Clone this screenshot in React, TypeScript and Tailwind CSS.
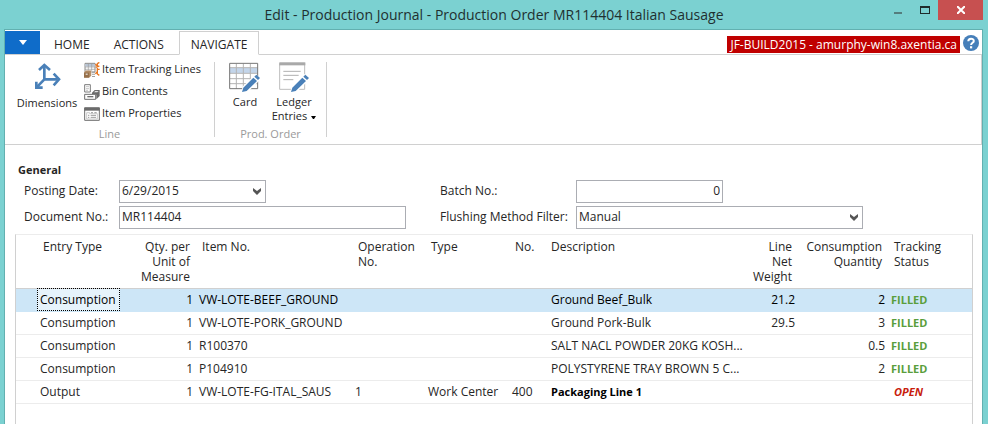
import React, { useState } from "react";

const columns = [
  { title: "", width: "w-[21px]", align: "text-left" },
  { title: "Entry Type", width: "w-[83px]", align: "text-left" },
  { title: "Qty. per\nUnit of\nMeasure", width: "w-[76px]", align: "text-right" },
  { title: "Item No.", width: "w-[156px]", align: "text-left" },
  { title: "Operation\nNo.", width: "w-[73px]", align: "text-left" },
  { title: "Type", width: "w-[84px]", align: "text-left" },
  { title: "No.", width: "w-[36px]", align: "text-left" },
  { title: "Description", width: "", align: "text-left" },
  { title: "Line\nNet\nWeight", width: "w-[56px]", align: "text-right" },
  { title: "Consumption\nQuantity", width: "w-[90px]", align: "text-right" },
  { title: "Tracking\nStatus", width: "w-[84px]", align: "text-left" },
];

const rows = [
  { entry: "Consumption", qty: "1", item: "VW-LOTE-BEEF_GROUND", op: "", type: "", no: "", desc: "Ground Beef_Bulk", weight: "21.2", consumed: "2", status: "FILLED" },
  { entry: "Consumption", qty: "1", item: "VW-LOTE-PORK_GROUND", op: "", type: "", no: "", desc: "Ground Pork-Bulk", weight: "29.5", consumed: "3", status: "FILLED" },
  { entry: "Consumption", qty: "1", item: "R100370", op: "", type: "", no: "", desc: "SALT NACL POWDER 20KG KOSH...", weight: "", consumed: "0.5", status: "FILLED" },
  { entry: "Consumption", qty: "1", item: "P104910", op: "", type: "", no: "", desc: "POLYSTYRENE TRAY BROWN 5 C...", weight: "", consumed: "2", status: "FILLED" },
  { entry: "Output", qty: "1", item: "VW-LOTE-FG-ITAL_SAUS", op: "1", type: "Work Center", no: "400", desc: "Packaging Line 1", weight: "", consumed: "", status: "OPEN" },
];

const DimensionsIcon = () => (
  <svg width="30" height="28" viewBox="-6 0 90 84" fill="none" stroke="#4a80b8" strokeWidth="8">
    <path d="M31 10V52H70M31 52L10 74" />
    <path d="M15 24L31 9L48 24" />
    <path d="M59 35L75 52L59 70" />
    <path d="M7 59V77H26" />
    <path d="M3 62V81H24Z" fill="#4a80b8" stroke="none" />
  </svg>
);

const Pencil = () => (
  <>
    <path d="M36 91L41 74L79 36L96 51L57 89Z" fill="#fff" />
    <path d="M39 90L43 77L73 47L84 57L53 87Z" fill="#4a80b8" />
    <path d="M76 44L82 38L93 48L87 54Z" fill="#4a80b8" />
  </>
);

const CardIcon = () => (
  <svg width="32" height="31" viewBox="0 0 96 93">
    <path d="M2 5H86V81H2Z" fill="#fff" />
    <path d="M3 18H86V33H3Z" fill="#c3d5ea" />
    <path d="M3 17H86M3 34H86M3 50H86M3 65H86M22 5V81M43 5V81M64 5V81" stroke="#b4b4b4" strokeWidth="3" />
    <path d="M2 4H86V80H2Z" fill="none" stroke="#757575" strokeWidth="3" />
    <Pencil />
  </svg>
);

const LedgerIcon = () => (
  <svg width="32" height="31" viewBox="0 0 96 93">
    <path d="M5 4H80V82H5Z" fill="#fff" stroke="#bdbdbd" strokeWidth="3" />
    <path d="M4 1H82V10H4Z" fill="#a9a9a9" />
    <path d="M16 28H68M16 40H62M16 53H46" stroke="#b0b0b0" strokeWidth="3" />
    <Pencil />
  </svg>
);

const TrackingIcon = () => (
  <svg width="16" height="16" viewBox="0 0 48 48">
    <path d="M3 4H33V30H3Z" fill="#fff" stroke="#8a8a8a" strokeWidth="3" />
    <path d="M4 6H32V14H4Z" fill="#b9c6d6" />
    <path d="M3 15H33M3 22H33M13 4V28M23 4V28" stroke="#9c9c9c" strokeWidth="2" />
    <path d="M0 31L6 25H22V41L16 47H0Z" fill="#b08a63" stroke="#fff" strokeWidth="1" />
    <path d="M0 32H15V47H0Z" fill="#96704a" />
    <path d="M5 35H11V38H5Z" fill="#fff" />
    <path d="M24 29H33V32H24ZM24 35H33V38H24ZM24 42H33V45H24Z" fill="#a0a0a0" />
    <path d="M46 1L40 5V36L46 40M40 12L34 7M40 22H47M40 29L34 35M35 16L46 12" fill="none" stroke="#e87722" strokeWidth="4" />
  </svg>
);

const BinIcon = () => (
  <svg width="16" height="16" viewBox="0 0 48 48">
    <path d="M2 2H19V24H2Z" fill="#fff" stroke="#7c7c7c" strokeWidth="3" />
    <path d="M6 8H15M6 14H15M6 19H12" stroke="#a8a8a8" strokeWidth="2" />
    <path d="M24 26L32 18H47V36L37 46V32H24Z" fill="#6b6b6b" />
    <path d="M30 25L34 21H44L40 25Z" fill="#e4e4e4" />
    <path d="M2 31H35V46H2Z" fill="#fff" stroke="#6f6f6f" strokeWidth="3" />
    <path d="M10 38H28" stroke="#6f6f6f" strokeWidth="4" />
  </svg>
);

const PropertiesIcon = () => (
  <svg width="16" height="16" viewBox="0 0 48 48">
    <path d="M2 6H46V43H2Z" fill="#fff" stroke="#6f6f6f" strokeWidth="3" />
    <path d="M1 4H47V14H1Z" fill="#6b6b6b" />
    <path d="M8 20H17V23H40V39H8Z" fill="#fff" stroke="#b0b0b0" strokeWidth="2" />
    <path d="M12 28H16M12 34H16M20 28H36M20 34H36M21 20H27M31 20H38" stroke="#9a9a9a" strokeWidth="3" />
  </svg>
);

const Chevron = () => (
  <svg className="pointer-events-none absolute right-[5px] top-[8px]" width="8" height="7" viewBox="0 0 8 7">
    <path d="M0 0L4 3L8 0V3L4 7L0 3Z" fill="#555" />
  </svg>
);

const smallActions = [
  { label: "Item Tracking Lines", Icon: TrackingIcon },
  { label: "Bin Contents", Icon: BinIcon },
  { label: "Item Properties", Icon: PropertiesIcon },
];

const TitleBar = () => (
  <div className="relative flex h-[29px] items-center justify-center">
    <h1 className="text-[14px] leading-[20px] text-[#1f3030]">
      Edit - Production Journal - Production Order MR114404 Italian Sausage
    </h1>
    <div className="absolute right-[5px] top-0 flex h-[20px]">
      <button aria-label="Minimize" className="flex w-[27px] items-center justify-center pt-[5px]">
        <span className="h-[2px] w-[8px] bg-[#547d7d]" />
      </button>
      <button aria-label="Maximize" className="flex w-[27px] items-center justify-center">
        <span className="h-[8px] w-[10px] border border-t-2 border-[#1f2b2b]" />
      </button>
      <button aria-label="Close" className="flex w-[45px] items-center justify-center bg-[#c75050]">
        <svg width="8" height="8" viewBox="0 0 8 8" stroke="#fff" strokeWidth="2">
          <path d="M0 0L8 8M8 0L0 8" />
        </svg>
      </button>
    </div>
  </div>
);

const TabStrip = () => {
  const [active, setActive] = useState("NAVIGATE");

  return (
    <div className="flex h-[24px] border-b border-[#d0d0d0]">
      <button aria-label="Application menu" className="flex w-[35px] items-center justify-center bg-[#0f6cc9]">
        <svg width="8" height="5" viewBox="0 0 8 5" fill="#fff">
          <path d="M0 0H8L4 5Z" />
        </svg>
      </button>
      <nav className="-mb-px flex pl-[2px]">
        {["HOME", "ACTIONS", "NAVIGATE"].map((tab) => (
          <button
            key={tab}
            onClick={() => setActive(tab)}
            className={`border px-[11px] pt-[3px] ${
              active === tab ? "ml-[3px] border-[#d0d0d0] border-b-white bg-white" : "border-transparent"
            }`}
          >
            {tab}
          </button>
        ))}
      </nav>
      <div className="ml-auto flex items-start gap-[3px] pr-[3px] pt-[4px]">
        <span className="mt-px h-[17px] bg-[#c00000] px-[3px] leading-[17px] text-white">
          JF-BUILD2015 - amurphy-win8.axentia.ca
        </span>
        <button aria-label="Help">
          <svg width="16" height="16" viewBox="0 0 16 16">
            <circle cx="8" cy="8" r="8" fill="#467fb9" />
            <path d="M5.3 6.2C5.3 2.8 10.8 2.9 10.8 5.9C10.8 7.8 8.1 7.8 8.1 10" fill="none" stroke="#fff" strokeWidth="2" />
            <path d="M7 11.2H9.2V13.4H7Z" fill="#fff" />
          </svg>
        </button>
      </div>
    </div>
  );
};

const Ribbon = () => (
  <div className="flex h-[90px] border-b border-r border-[#d0d0d0] pb-[7px] pt-[7px] text-[11px]">
    <div className="flex w-[210px] flex-col justify-between border-r border-[#d0d0d0]">
      <div className="flex">
        <button className="flex w-[79px] flex-col items-center pl-[5px]">
          <DimensionsIcon />
          <span className="mt-[5px] leading-[15px]">Dimensions</span>
        </button>
        <div className="flex flex-col">
          {smallActions.map(({ label, Icon }) => (
            <button key={label} className="flex h-[22px] items-start gap-[2px] whitespace-nowrap text-left leading-[14px]">
              <Icon />
              {label}
            </button>
          ))}
        </div>
      </div>
      <div className="-mb-[4px] -mt-[8px] text-center leading-[14px] text-[#9a9a9a]">Line</div>
    </div>
    <div className="flex w-[112px] flex-col justify-between border-r border-[#d0d0d0]">
      <div className="flex pl-[11px]">
        <button className="flex w-[38px] flex-col items-center">
          <CardIcon />
          <span className="mt-[2px] leading-[14px]">Card</span>
        </button>
        <button className="flex w-[60px] flex-col items-center">
          <LedgerIcon />
          <span className="mt-[2px] leading-[14px]">
            Ledger
            <br />
            Entries
            <svg className="ml-[4px] inline-block align-middle" width="5" height="3" viewBox="0 0 5 3">
              <path d="M0 0H5L3 3H2Z" />
            </svg>
          </span>
        </button>
      </div>
      <div className="-mb-[4px] -mt-[8px] text-center leading-[14px] text-[#9a9a9a]">Prod. Order</div>
    </div>
  </div>
);

const fieldBox = "block h-[23px] w-full appearance-none rounded-none border border-[#abadb3] bg-white px-[2px] pb-[2px] text-[12px]";

const GeneralForm = () => (
  <section className="px-[13px] pt-[16px]">
    <h2 className="h-[19px] text-[11px] font-bold leading-[18px]">General</h2>
    <div className="grid grid-cols-[minmax(0,416px)_minmax(0,1fr)] gap-y-[3px] pl-[6px]">
      <div className="flex">
        <label htmlFor="posting-date" className="w-[95px] shrink-0 leading-[21px]">Posting Date:</label>
        <div className="relative w-full max-w-[147px]">
          <select id="posting-date" className={fieldBox}>
            <option>6/29/2015</option>
          </select>
          <Chevron />
        </div>
      </div>
      <div className="flex">
        <label htmlFor="batch-no" className="w-[136px] shrink-0 leading-[21px]">Batch No.:</label>
        <div className="w-full max-w-[147px]">
          <input id="batch-no" defaultValue="0" className={`${fieldBox} text-right`} />
        </div>
      </div>
      <div className="flex">
        <label htmlFor="document-no" className="w-[95px] shrink-0 leading-[21px]">Document No.:</label>
        <div className="w-full max-w-[287px]">
          <input id="document-no" defaultValue="MR114404" className={fieldBox} />
        </div>
      </div>
      <div className="flex">
        <label htmlFor="flushing" className="w-[136px] shrink-0 leading-[21px]">Flushing Method Filter:</label>
        <div className="relative w-full max-w-[287px]">
          <select id="flushing" className={fieldBox}>
            <option>Manual</option>
          </select>
          <Chevron />
        </div>
      </div>
    </div>
  </section>
);

const JournalLines = () => {
  const [selected, setSelected] = useState(0);

  return (
    <div className="ml-[10px] mr-[9px] mt-[5px] grow border-x border-t border-x-[#d0d0d0] border-t-[#ececec]">
      <table className="w-full table-fixed border-collapse">
        <thead>
          <tr className="h-[53px] border-b border-[#d0d0d0]">
            {columns.map(({ title, width, align }, i) => (
              <th key={i} className={`${width} ${align} whitespace-pre px-[6px] pt-[4px] align-top font-normal leading-[15px]`}>
                {title}
              </th>
            ))}
          </tr>
        </thead>
        <tbody>
          {rows.map((row, i) => {
            const isSelected = i === selected;
            const isOpen = row.status === "OPEN";
            return (
              <tr
                key={row.item}
                onClick={() => setSelected(i)}
                className={`h-[23px] whitespace-nowrap border-b leading-[18px] ${
                  isSelected ? "border-[#cde6f7] bg-[#cde6f7] text-black" : "border-[#ececec]"
                }`}
              >
                <td />
                <td className={`px-[3px] ${isSelected ? "bg-[#e6f3fb] outline-1 -outline-offset-1 outline-dotted outline-black" : ""}`}>
                  {row.entry}
                </td>
                <td className="px-[3px] text-right">{row.qty}</td>
                <td className="px-[3px]">{row.item}</td>
                <td className="px-[3px]">{row.op}</td>
                <td className="px-[3px]">{row.type}</td>
                <td className="px-[3px]">{row.no}</td>
                <td className={`px-[6px] ${isOpen ? "text-[11px] font-bold text-black" : ""}`}>{row.desc}</td>
                <td className="px-[3px] text-right">{row.weight}</td>
                <td className="px-[3px] text-right">{row.consumed}</td>
                <td className={`text-[11px] font-bold ${isOpen ? "px-[6px] italic text-[#c8200c]" : "px-[3px] text-[#5a9e3c]"}`}>
                  {row.status}
                </td>
              </tr>
            );
          })}
        </tbody>
      </table>
    </div>
  );
};

export default function App() {
  return (
    <div className="flex min-h-screen flex-col bg-[#7bd1d1] font-['Open_Sans','Noto_Sans',sans-serif] text-[12px] text-[#262626]">
      <TitleBar />
      <main className="ml-[4px] mr-[5px] flex grow flex-col border-x border-t border-[#62b0b0] bg-white pt-px">
        <TabStrip />
        <Ribbon />
        <GeneralForm />
        <JournalLines />
      </main>
    </div>
  );
}
